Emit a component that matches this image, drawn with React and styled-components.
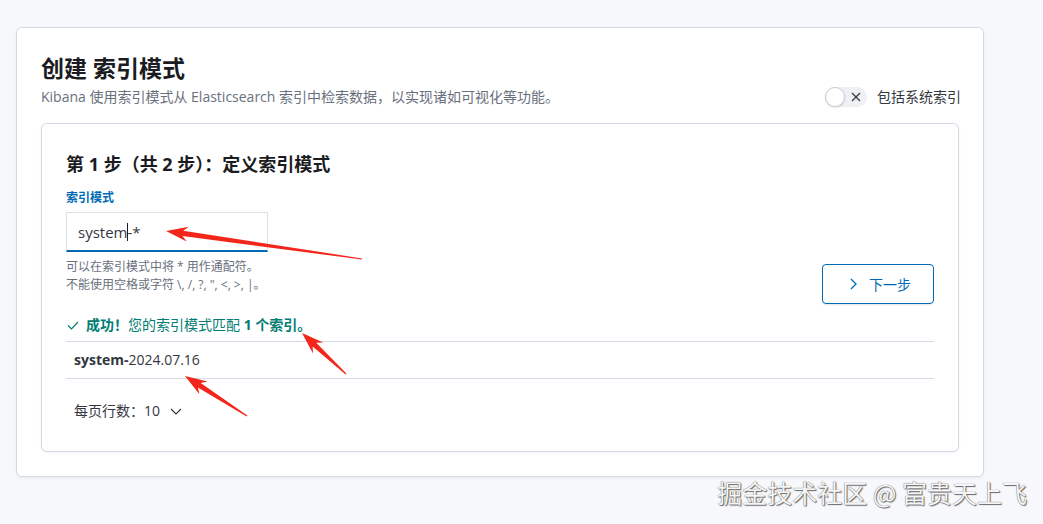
import React from "react";
import styled, { createGlobalStyle } from "styled-components";

const GlobalStyle = createGlobalStyle`
  body {
    margin: 0;
    background: #f7f8fc;
    font-family: "Open Sans", "Noto Sans CJK SC", sans-serif;
    color: #343741;
  }
`;

const Page = styled.div`
  position: relative;
  width: 1043px;
  height: 524px;
  padding: 27px 0 0 16px;
  box-sizing: border-box;
  overflow: hidden;
`;

const Panel = styled.div`
  width: 968px;
  box-sizing: border-box;
  padding: 24px;
  background: #fff;
  border: 1px solid #d3dae6;
  border-radius: 6px;
  box-shadow: 0 1px 3px rgba(0, 0, 0, 0.06);
`;

const Header = styled.div`
  display: flex;
  justify-content: space-between;
  align-items: flex-end;
`;

const Title = styled.h1`
  margin: 0;
  font-size: 23px;
  line-height: 32px;
  font-weight: 700;
  color: #1a1c21;
`;

const Subtitle = styled.p`
  margin: 3px 0 0;
  font-size: 14px;
  line-height: 20px;
  color: #69707d;
`;

const SwitchWrap = styled.label`
  display: flex;
  align-items: center;
  gap: 10px;
  font-size: 14px;
  line-height: 20px;
  color: #343741;
  margin-right: -2px;
`;

const Track = styled.span`
  position: relative;
  display: flex;
  align-items: center;
  justify-content: flex-end;
  width: 42px;
  height: 20px;
  padding-right: 5px;
  box-sizing: border-box;
  border-radius: 10px;
  background: #eef0f3;
`;

const Thumb = styled.span`
  position: absolute;
  left: 0;
  top: 0;
  width: 20px;
  height: 20px;
  box-sizing: border-box;
  border-radius: 50%;
  background: #fff;
  border: 1px solid #c9ced6;
  box-shadow: 0 1px 2px rgba(0, 0, 0, 0.12);
`;

const Card = styled.div`
  margin-top: 16px;
  padding: 28px 24px 30px;
  border: 1px solid #d3dae6;
  border-radius: 6px;
  background: #fff;
  box-shadow: 0 1px 3px rgba(0, 0, 0, 0.06);
`;

const StepTitle = styled.h2`
  margin: 0;
  font-size: 18px;
  line-height: 24px;
  font-weight: 700;
  color: #1a1c21;
`;

const FormRow = styled.div`
  display: flex;
  justify-content: space-between;
  align-items: flex-start;
`;

const Field = styled.div`
  display: flex;
  flex-direction: column;
`;

const FieldLabel = styled.label`
  margin-top: 13px;
  font-size: 12px;
  line-height: 18px;
  font-weight: 700;
  color: #006bb4;
`;

const Input = styled.div`
  margin-top: 5px;
  width: 202px;
  height: 40px;
  box-sizing: border-box;
  display: flex;
  align-items: center;
  padding-left: 11px;
  background: #fff;
  border: 1px solid #dde1e6;
  border-bottom: 2px solid #006bb4;
  font-size: 15px;
  color: #343741;
`;

const Caret = styled.span`
  display: inline-block;
  width: 1px;
  height: 18px;
  margin: 0 -1px 0 0;
  background: #1a1c21;
  vertical-align: middle;
`;

const Help = styled.div`
  margin-top: 6px;
  font-size: 12px;
  line-height: 18px;
  color: #69707d;
`;

const NextButton = styled.button`
  margin-top: 88px;
  width: 112px;
  height: 40px;
  display: flex;
  align-items: center;
  justify-content: center;
  gap: 8px;
  background: #fff;
  border: 1px solid #006bb4;
  border-radius: 4px;
  color: #006bb4;
  font-family: inherit;
  font-size: 14px;
  box-shadow: 0 2px 2px -1px rgba(0, 0, 0, 0.1);
`;

const Success = styled.div`
  margin-top: 11px;
  display: flex;
  align-items: center;
  gap: 6px;
  font-size: 14px;
  line-height: 20px;
  color: #017d73;
`;

const Table = styled.div`
  margin-top: 6px;
  border-top: 1px solid #d3dae6;
  border-bottom: 1px solid #d3dae6;
`;

const Cell = styled.div`
  padding: 8px;
  font-size: 14px;
  line-height: 20px;
  color: #343741;
`;

const Pager = styled.div`
  margin-top: 22px;
  padding-left: 8px;
  display: flex;
  align-items: center;
  gap: 9px;
  font-size: 14px;
  line-height: 20px;
  color: #343741;
`;

const Overlay = styled.svg`
  position: absolute;
  left: 0;
  top: 0;
  pointer-events: none;
`;

const Watermark = styled.div`
  position: absolute;
  top: 476px;
  right: 16px;
  font-family: "Noto Sans CJK SC", sans-serif;
  font-size: 25px;
  line-height: 32px;
  color: #f6f6f6;
  text-shadow: 0 0 1px #3a3a3a, 1px 1px 1px rgba(0, 0, 0, 0.55);
`;

// tapered red annotation arrow, thin at the tail, barbed at the tip
const arrowPoints = ([x1, y1], [x2, y2]) => {
  const len = Math.hypot(x2 - x1, y2 - y1);
  const ux = (x2 - x1) / len;
  const uy = (y2 - y1) / len;
  const nx = -uy;
  const ny = ux;
  const head = 22;
  const bx = x2 - ux * head;
  const by = y2 - uy * head;
  const nb = x2 - ux * (head - 5);
  const nbY = y2 - uy * (head - 5);
  const pts = [
    [x1 + nx * 0.6, y1 + ny * 0.6],
    [nb + nx * 2.6, nbY + ny * 2.6],
    [bx + nx * 7.5, by + ny * 7.5],
    [x2, y2],
    [bx - nx * 7.5, by - ny * 7.5],
    [nb - nx * 2.6, nbY - ny * 2.6],
    [x1 - nx * 0.6, y1 - ny * 0.6],
  ];
  return pts.map((p) => p.join(",")).join(" ");
};

const arrows = [
  [[362, 259], [166, 231]],
  [[346, 374], [302, 333]],
  [[247, 416], [185, 376]],
];

const App = () => (
  <Page>
    <GlobalStyle />
    <Panel>
      <Header>
        <div>
          <Title>创建 索引模式</Title>
          <Subtitle>
            Kibana 使用索引模式从 Elasticsearch 索引中检索数据，以实现诸如可视化等功能。
          </Subtitle>
        </div>
        <SwitchWrap>
          <Track>
            <Thumb />
            <svg width="12" height="12" viewBox="0 0 12 12">
              <path d="M2 2 L10 10 M10 2 L2 10" stroke="#343741" strokeWidth="1.2" />
            </svg>
          </Track>
          包括系统索引
        </SwitchWrap>
      </Header>

      <Card>
        <StepTitle>第 1 步（共 2 步）：定义索引模式</StepTitle>
        <FormRow>
          <Field>
            <FieldLabel>索引模式</FieldLabel>
            <Input>
              system
              <Caret />
              -*
            </Input>
            <Help>
              可以在索引模式中将 * 用作通配符。
              <br />
              不能使用空格或字符 \, /, ?, ", &lt;, &gt;, |。
            </Help>
          </Field>
          <NextButton>
            <svg width="16" height="16" viewBox="0 0 16 16">
              <path d="M6 3 L11 8 L6 13" fill="none" stroke="#006bb4" strokeWidth="1.3" />
            </svg>
            下一步
          </NextButton>
        </FormRow>

        <Success>
          <svg width="14" height="14" viewBox="0 0 14 14">
            <path d="M2 7.5 L5.5 11 L12 4" fill="none" stroke="#017d73" strokeWidth="1.2" />
          </svg>
          <span>
            <b>成功！</b>您的索引模式匹配 <b>1 个索引。</b>
          </span>
        </Success>

        <Table>
          <Cell>
            <b>system-</b>2024.07.16
          </Cell>
        </Table>

        <Pager>
          每页行数：10
          <svg width="14" height="14" viewBox="0 0 14 14">
            <path d="M2 5 L7 10 L12 5" fill="none" stroke="#343741" strokeWidth="1.2" />
          </svg>
        </Pager>
      </Card>
    </Panel>

    <Overlay width="1043" height="524">
      {arrows.map(([tail, tip], i) => (
        <polygon key={i} points={arrowPoints(tail, tip)} fill="#f3261b" />
      ))}
    </Overlay>

    <Watermark>掘金技术社区 @ 富贵天上飞</Watermark>
  </Page>
);

export default App;
